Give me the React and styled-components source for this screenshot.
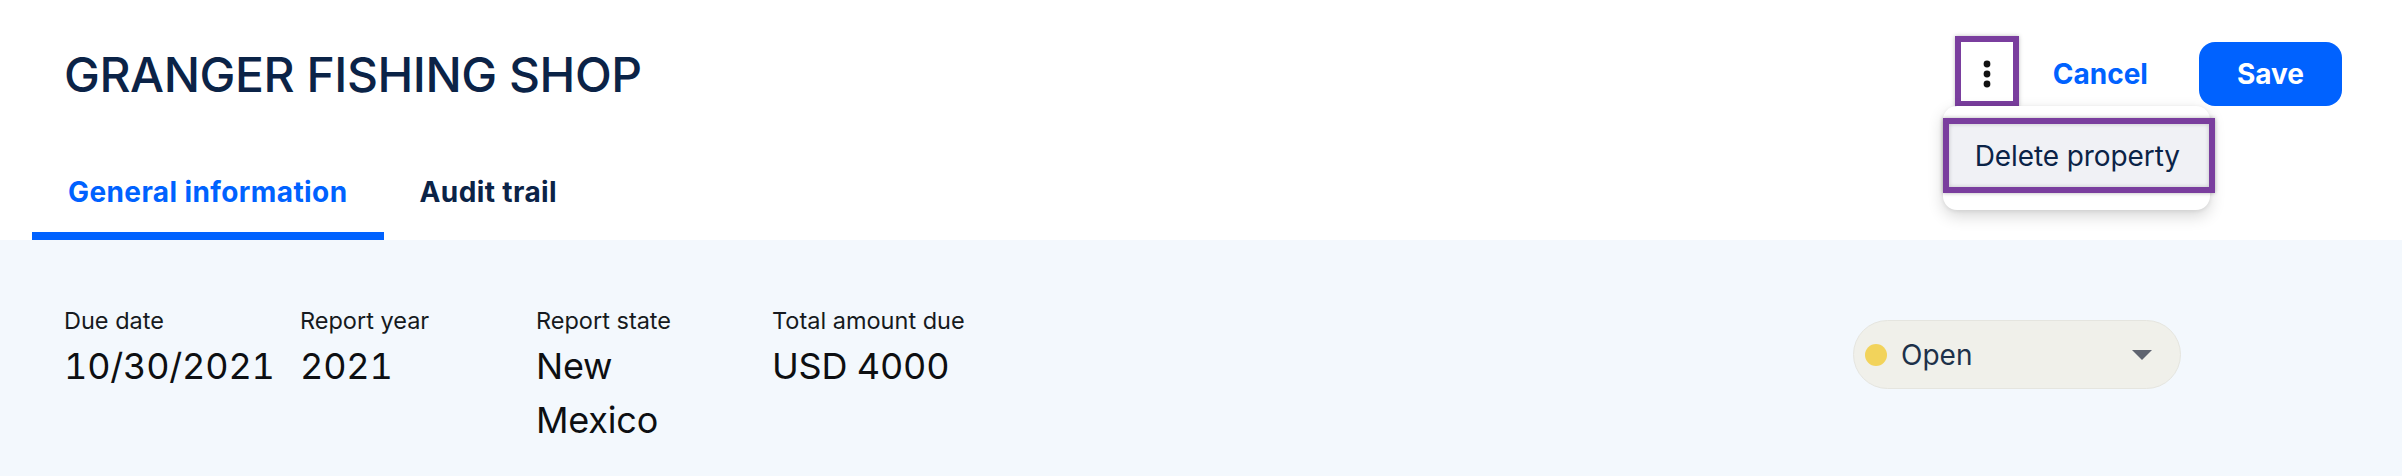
import React from "react";
import styled, { createGlobalStyle } from "styled-components";

const GlobalStyle = createGlobalStyle`
  html, body {
    margin: 0;
    padding: 0;
    background: #ffffff;
    font-family: Inter, "Noto Sans", "Liberation Sans", sans-serif;
  }
  * { box-sizing: border-box; }
`;

const PURPLE = "#7a3e9e";
const BLUE = "#0062ff";
const NAVY = "#0b2347";

const Page = styled.div`
  width: 2402px;
  min-height: 476px;
  background: #ffffff;
  overflow: hidden;
`;

const Header = styled.header`
  display: flex;
  align-items: center;
  justify-content: space-between;
  height: 106px;
  padding: 42px 60px 0 64px;
`;

const Title = styled.h1`
  margin: 2px 0 0;
  font-size: 48px;
  line-height: 58px;
  font-weight: 500;
  color: ${NAVY};
  letter-spacing: -0.45px;
`;

const Actions = styled.div`
  display: flex;
  align-items: center;
  height: 64px;
`;

const KebabWrap = styled.div`
  position: relative;
  align-self: flex-start;
  margin-top: -6px;
`;

const KebabButton = styled.button`
  display: flex;
  align-items: center;
  justify-content: center;
  width: 64px;
  height: 71px;
  padding: 4px 0 0;
  background: #ffffff;
  border: 6px solid ${PURPLE};
  box-shadow: 0 0 4px rgba(0, 0, 0, 0.25);
  cursor: pointer;
`;

const Menu = styled.div`
  position: absolute;
  top: calc(100% - 1px);
  left: -12px;
  width: 267px;
  padding: 12px 0 17px;
  background: #ffffff;
  border-radius: 14px;
  box-shadow: 0 6px 16px rgba(0, 0, 0, 0.16), 0 1px 4px rgba(0, 0, 0, 0.08);
  z-index: 2;
`;

const MenuItem = styled.div`
  display: flex;
  align-items: center;
  width: 272px;
  height: 75px;
  padding: 0 0 0 26px;
  background: #f0f1f5;
  border: 6px solid ${PURPLE};
  box-shadow: 0 0 4px rgba(0, 0, 0, 0.3), inset 0 0 4px rgba(0, 0, 0, 0.2);
  font-size: 28px;
  font-weight: 400;
  color: ${NAVY};
  letter-spacing: -0.1px;
  white-space: nowrap;
`;

const TextButton = styled.button`
  height: 64px;
  margin-left: 8px;
  padding: 0 26px;
  background: transparent;
  border: none;
  font-family: inherit;
  font-size: 28px;
  font-weight: 700;
  color: ${BLUE};
  cursor: pointer;
`;

const PrimaryButton = styled.button`
  height: 64px;
  margin-left: 25px;
  padding: 0 38px;
  background: ${BLUE};
  border: none;
  border-radius: 16px;
  font-family: inherit;
  font-size: 28px;
  font-weight: 700;
  color: #ffffff;
  cursor: pointer;
`;

const TabBar = styled.nav`
  display: flex;
  margin-top: 65px;
  padding-left: 32px;
`;

const Tab = styled.div`
  padding: 0 36px 19px;
  font-size: 28px;
  line-height: 42px;
  font-weight: 700;
  letter-spacing: 0.4px;
  color: ${(p) => (p.$active ? BLUE : NAVY)};
  border-bottom: 8px solid ${(p) => (p.$active ? BLUE : "transparent")};
  cursor: pointer;
`;

const Panel = styled.section`
  display: flex;
  align-items: flex-start;
  justify-content: space-between;
  min-height: 236px;
  padding: 63px 60px 0 64px;
  background: #f3f8fd;
`;

const Fields = styled.div`
  display: flex;
  gap: 46px;
`;

const Field = styled.div`
  width: 190px;
`;

const Label = styled.div`
  font-size: 23.5px;
  line-height: 36px;
  color: #161a20;
  white-space: nowrap;
`;

const Value = styled.div`
  font-size: 36px;
  line-height: 54px;
  color: #0d0f12;
  font-variant-numeric: tabular-nums;
  letter-spacing: -0.2px;
`;

const StatusSelect = styled.button`
  display: flex;
  align-items: center;
  width: 328px;
  height: 69px;
  margin: 17px 161px 0 0;
  padding: 0 28px 0 11px;
  background: #f0f0ea;
  border: 1px solid #e5e5df;
  border-radius: 35px;
  font-family: inherit;
  cursor: pointer;
`;

const Dot = styled.span`
  width: 22px;
  height: 22px;
  border-radius: 50%;
  background: ${(p) => p.$color};
  flex: none;
`;

const StatusText = styled.span`
  flex: 1;
  margin-left: 14px;
  text-align: left;
  font-size: 28px;
  color: #1d3149;
`;

const KebabIcon = () => (
  <svg width="8" height="28" viewBox="0 0 8 28" aria-hidden="true">
    <circle cx="4" cy="4" r="3.4" fill="#111" />
    <circle cx="4" cy="14" r="3.4" fill="#111" />
    <circle cx="4" cy="24" r="3.4" fill="#111" />
  </svg>
);

const Caret = () => (
  <svg width="20" height="10" viewBox="0 0 20 10" aria-hidden="true">
    <path d="M0 0 H20 L10 10 Z" fill="#5f6470" />
  </svg>
);

const fields = [
  { label: "Due date", value: "10/30/2021" },
  { label: "Report year", value: "2021" },
  { label: "Report state", value: "New Mexico" },
  { label: "Total amount due", value: "USD 4000" },
];

export default function App() {
  return (
    <Page>
      <GlobalStyle />
      <Header>
        <Title>GRANGER FISHING SHOP</Title>
        <Actions>
          <KebabWrap>
            <KebabButton aria-label="More actions">
              <KebabIcon />
            </KebabButton>
            <Menu>
              <MenuItem>Delete property</MenuItem>
            </Menu>
          </KebabWrap>
          <TextButton>Cancel</TextButton>
          <PrimaryButton>Save</PrimaryButton>
        </Actions>
      </Header>
      <TabBar>
        <Tab $active>General information</Tab>
        <Tab>Audit trail</Tab>
      </TabBar>
      <Panel>
        <Fields>
          {fields.map((f) => (
            <Field key={f.label}>
              <Label>{f.label}</Label>
              <Value>{f.value}</Value>
            </Field>
          ))}
        </Fields>
        <StatusSelect>
          <Dot $color="#f2d35b" />
          <StatusText>Open</StatusText>
          <Caret />
        </StatusSelect>
      </Panel>
    </Page>
  );
}
